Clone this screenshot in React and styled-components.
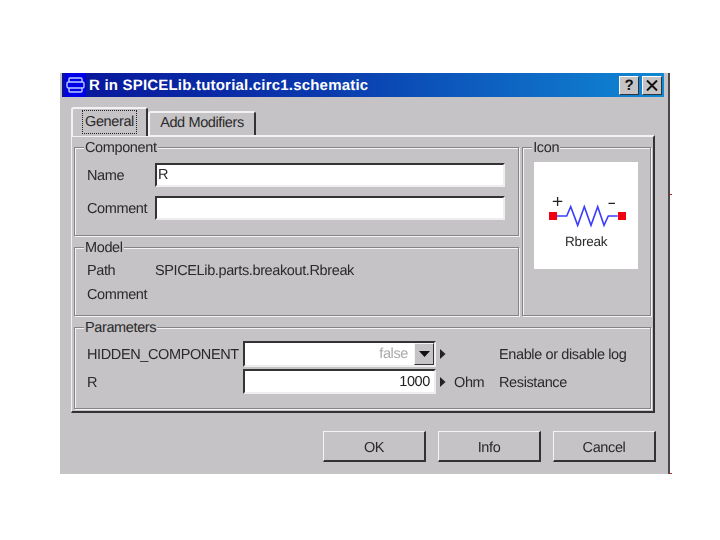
import React from "react";
import styled, { createGlobalStyle } from "styled-components";

const Global = createGlobalStyle`
  html, body { margin: 0; padding: 0; background: #fff; }
  body {
    font-family: "Liberation Sans", Arial, sans-serif;
    text-rendering: geometricPrecision;
  }
`;

const Dialog = styled.div`
  box-sizing: border-box;
  position: relative;
  width: 610px;
  height: 401px;
  margin: 73px 0 0 60px;
  padding: 0 4px 0 2px;
  background: #c6c3c6;
  border-right: 2px solid #4a484a;
  color: #2a2a2a;
  font-size: 14.5px;
  letter-spacing: -0.38px;
  filter: blur(0.4px);

  &::before,
  &::after {
    content: "";
    position: absolute;
    right: -4px;
    width: 2px;
    height: 1px;
    background: #d02020;
  }
  &::before { top: 121px; }
  &::after { top: 400px; }
`;

const TitleBar = styled.div`
  display: flex;
  align-items: center;
  height: 24px;
  background: linear-gradient(90deg, #08149a 0%, #0a3cae 45%, #1088d4 100%);
  color: #fff;
  font-weight: 700;
  font-size: 15px;
  letter-spacing: 0;
`;

const AppIcon = styled.div`
  display: flex;
  align-items: center;
  justify-content: center;
  width: 21px;
  height: 24px;
  margin: 0 3px 0 3px;
  background: #0000e8;
`;

const TitleText = styled.span`
  flex: 1;
  letter-spacing: 0.2px;
`;

const TitleButtons = styled.div`
  display: flex;
  gap: 3px;
  margin-right: 2px;
`;

const TitleButton = styled.div`
  box-sizing: border-box;
  display: flex;
  align-items: center;
  justify-content: center;
  width: 20px;
  height: 19px;
  background: #c6c3c6;
  border: 1px solid;
  border-color: #fff #333 #333 #fff;
  color: #111;
  font-weight: 700;
  font-size: 15px;
`;

const TabStrip = styled.div`
  display: flex;
  align-items: flex-end;
  height: 38px;
  margin-left: 9px;
  position: relative;
  z-index: 1;
`;

const Tab = styled.div`
  box-sizing: border-box;
  display: flex;
  align-items: center;
  justify-content: center;
  width: ${(p) => p.$w}px;
  height: ${(p) => (p.$active ? 29 : 24)}px;
  margin-bottom: ${(p) => (p.$active ? -1 : 0)}px;
  padding-bottom: ${(p) => (p.$active ? 1 : 3)}px;
  background: #c6c3c6;
  border-top: 2px solid #f2f2f2;
  border-left: 2px solid #f2f2f2;
  border-right: 2px solid #333;
  border-radius: 3px 3px 0 0;
`;

const FocusText = styled.span`
  padding: 0 2px;
  outline: 1px dotted #222;
  line-height: 22px;
`;

const TabPanel = styled.div`
  box-sizing: border-box;
  display: flex;
  flex-direction: column;
  gap: 11px;
  width: 584px;
  height: 278px;
  margin-left: 9px;
  padding: 10px 2px 0 2px;
  border: 1px solid;
  border-width: 2px 2px 2px 1px;
  border-color: #f2f2f2 #333 #333 #f2f2f2;
`;

const TopRow = styled.div`
  display: flex;
  gap: 3px;
  height: 169px;
`;

const LeftColumn = styled.div`
  display: flex;
  flex-direction: column;
  gap: 11px;
  width: 446px;
`;

const Group = styled.div`
  box-sizing: border-box;
  position: relative;
  width: ${(p) => (p.$w ? `${p.$w}px` : "auto")};
  height: ${(p) => p.$h}px;
  padding: ${(p) => p.$pad};
  border: 1px solid #858385;
  box-shadow: inset 1px 1px 0 #f4f4f4, 1px 1px 0 #f4f4f4;
`;

const Legend = styled.span`
  position: absolute;
  top: -8px;
  left: 9px;
  padding: 0 1px;
  background: #c6c3c6;
  line-height: 17px;
`;

const FieldRow = styled.div`
  display: flex;
  align-items: center;
  height: 24px;
  margin-bottom: 9px;
`;

const Label = styled.span`
  width: 68px;
  padding-top: 2px;
`;

const TextInput = styled.div`
  box-sizing: border-box;
  width: 350px;
  height: 24px;
  padding-left: 1px;
  background: #fff;
  border: 2px solid;
  border-color: #333 #eee #eee #333;
  line-height: 21px;
`;

const InfoRow = styled.div`
  display: flex;
  align-items: center;
  height: 24px;
`;

const InfoValue = styled.span`
  padding-top: 2px;
`;

const IconBox = styled.div`
  display: flex;
  flex-direction: column;
  align-items: center;
  box-sizing: border-box;
  width: 104px;
  height: 107px;
  padding-top: 35px;
  background: #fff;
  font-size: 13.5px;
  letter-spacing: -0.2px;
`;

const IconCaption = styled.span`
  margin-top: 3px;
  line-height: 17px;
`;

const ParamGrid = styled.div`
  display: grid;
  grid-template-columns: 156px 193px 18px 45px 1fr;
  grid-template-rows: 26px 25px;
  row-gap: 2px;
  align-items: center;
`;

const Cell = styled.span`
  padding-top: 2px;
`;

const Field = styled.div`
  box-sizing: border-box;
  display: flex;
  align-items: center;
  justify-content: flex-end;
  align-self: stretch;
  background: #fff;
  border: 2px solid;
  border-color: #333 #eee #eee #333;
  padding-right: ${(p) => (p.$select ? 0 : 4)}px;
  color: ${(p) => (p.$muted ? "#aaa" : "#222")};
`;

const DropButton = styled.div`
  box-sizing: border-box;
  display: flex;
  align-items: center;
  justify-content: center;
  width: 20px;
  height: 22px;
  margin-left: 6px;
  background: #c6c3c6;
  border: 1px solid;
  border-color: #f4f4f4 #333 #333 #f4f4f4;
`;

const Arrow = styled.svg`
  display: block;
  margin-left: 4px;
`;

const Footer = styled.div`
  display: flex;
  justify-content: flex-end;
  gap: 12px;
  margin: 18px 8px 0 0;
`;

const Button = styled.div`
  box-sizing: border-box;
  display: flex;
  align-items: center;
  justify-content: center;
  width: 103px;
  height: 31px;
  padding-top: 3px;
  background: #c6c3c6;
  border: 1px solid;
  border-width: 1px 2px 2px 1px;
  border-color: #f4f4f4 #333 #333 #f4f4f4;
`;

const Play = () => (
  <Arrow width="6" height="10" viewBox="0 0 6 10">
    <path d="M0 0 L5.5 5 L0 10 Z" fill="#222" />
  </Arrow>
);

export default function App() {
  return (
    <>
      <Global />
      <Dialog>
        <TitleBar>
          <AppIcon>
            <svg width="19" height="16" viewBox="0 0 19 16" fill="none" stroke="#b8ccff" strokeWidth="1.4">
              <path d="M3 5 V2 Q3 1 4 1 H15 Q16 1 16 2 V5" />
              <rect x="1" y="5" width="17" height="6" rx="1.5" />
              <path d="M3 11 V14 Q3 15 4 15 H15 Q16 15 16 14 V11" />
            </svg>
          </AppIcon>
          <TitleText>R in SPICELib.tutorial.circ1.schematic</TitleText>
          <TitleButtons>
            <TitleButton>?</TitleButton>
            <TitleButton>
              <svg width="12" height="11" viewBox="0 0 12 11" stroke="#111" strokeWidth="2">
                <path d="M1 0.5 L11 10.5 M11 0.5 L1 10.5" />
              </svg>
            </TitleButton>
          </TitleButtons>
        </TitleBar>
        <TabStrip>
          <Tab $active $w={77}>
            <FocusText>General</FocusText>
          </Tab>
          <Tab $w={108}>Add Modifiers</Tab>
        </TabStrip>
        <TabPanel>
          <TopRow>
            <LeftColumn>
              <Group $h={89} $pad="15px 0 0 12px">
                <Legend>Component</Legend>
                <FieldRow>
                  <Label>Name</Label>
                  <TextInput>R</TextInput>
                </FieldRow>
                <FieldRow>
                  <Label>Comment</Label>
                  <TextInput />
                </FieldRow>
              </Group>
              <Group $h={69} $pad="10px 0 0 12px">
                <Legend>Model</Legend>
                <InfoRow>
                  <Label>Path</Label>
                  <InfoValue>SPICELib.parts.breakout.Rbreak</InfoValue>
                </InfoRow>
                <InfoRow>
                  <Label>Comment</Label>
                </InfoRow>
              </Group>
            </LeftColumn>
            <Group $w={129} $h={169} $pad="14px 0 0 11px">
              <Legend>Icon</Legend>
              <IconBox>
                <svg width="104" height="33" viewBox="0 0 104 33" fill="none">
                  <path d="M22.7 19 H32.7 L36.7 9.7 L43.7 28.3 L50.3 9.7 L57 28.3 L63.7 9.7 L70 28.3 L74.3 19 H83.7" stroke="#3c3cff" strokeWidth="1.6" />
                  <rect x="15" y="15" width="8" height="8" fill="#f00010" />
                  <rect x="84" y="15" width="8" height="8" fill="#f00010" />
                  <path d="M18.8 4.3 H28.3 M23.6 -0.5 V9 M74.5 6.3 H81" stroke="#222" strokeWidth="1.3" />
                </svg>
                <IconCaption>Rbreak</IconCaption>
              </IconBox>
            </Group>
          </TopRow>
          <Group $h={82} $pad="13px 0 0 12px">
            <Legend>Parameters</Legend>
            <ParamGrid>
              <Cell>HIDDEN_COMPONENT</Cell>
              <Field $select $muted>
                false
                <DropButton>
                  <svg width="11" height="6" viewBox="0 0 11 6">
                    <path d="M0 0 H11 L5.5 6 Z" fill="#111" />
                  </svg>
                </DropButton>
              </Field>
              <Play />
              <Cell />
              <Cell>Enable or disable log</Cell>
              <Cell>R</Cell>
              <Field>1000</Field>
              <Play />
              <Cell>Ohm</Cell>
              <Cell>Resistance</Cell>
            </ParamGrid>
          </Group>
        </TabPanel>
        <Footer>
          <Button>OK</Button>
          <Button>Info</Button>
          <Button>Cancel</Button>
        </Footer>
      </Dialog>
    </>
  );
}
